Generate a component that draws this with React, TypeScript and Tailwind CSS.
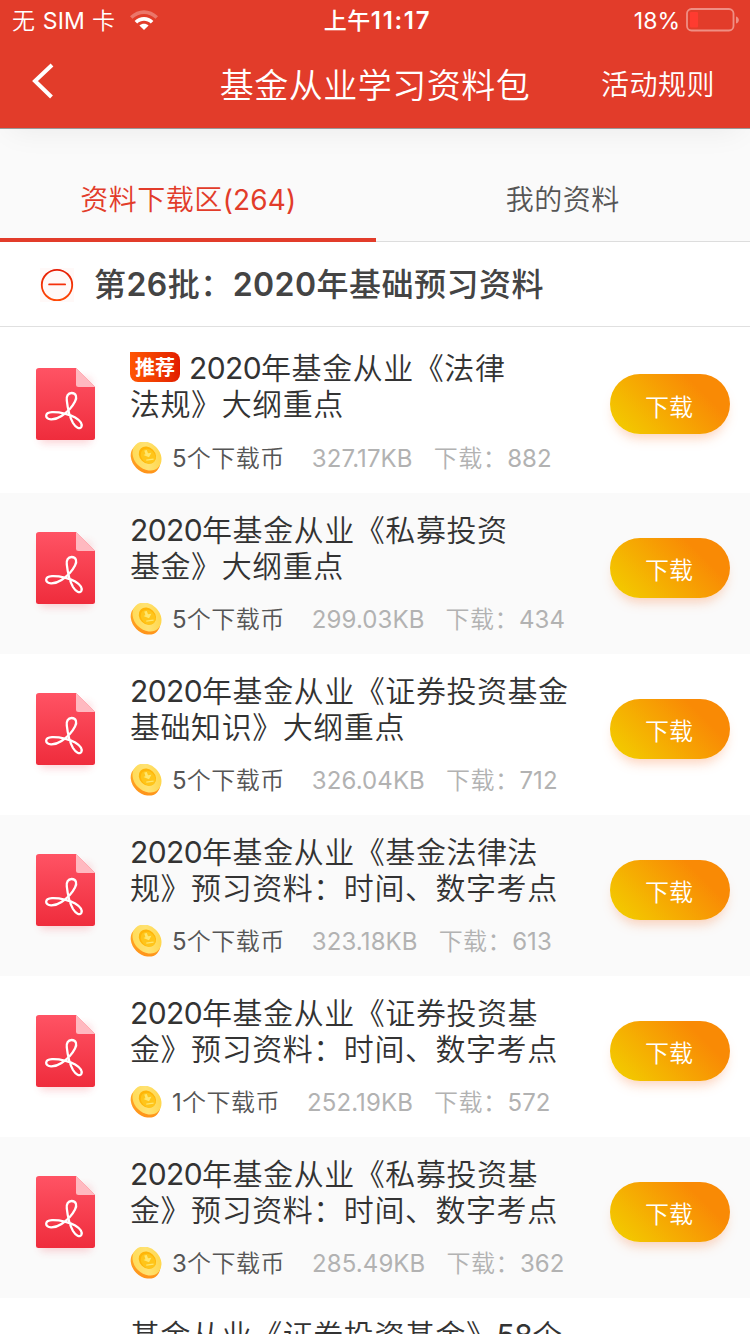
import clsx from 'clsx';

interface Material {
  id: number;
  title: string[];
  recommended?: boolean;
  coins?: number;
  size?: string;
  downloads?: number;
}

const materials: Material[] = [
  { id: 1, title: ['2020年基金从业《法律', '法规》大纲重点'], recommended: true, coins: 5, size: '327.17KB', downloads: 882 },
  { id: 2, title: ['2020年基金从业《私募投资', '基金》大纲重点'], coins: 5, size: '299.03KB', downloads: 434 },
  { id: 3, title: ['2020年基金从业《证券投资基金', '基础知识》大纲重点'], coins: 5, size: '326.04KB', downloads: 712 },
  { id: 4, title: ['2020年基金从业《基金法律法', '规》预习资料：时间、数字考点'], coins: 5, size: '323.18KB', downloads: 613 },
  { id: 5, title: ['2020年基金从业《证券投资基', '金》预习资料：时间、数字考点'], coins: 1, size: '252.19KB', downloads: 572 },
  { id: 6, title: ['2020年基金从业《私募投资基', '金》预习资料：时间、数字考点'], coins: 3, size: '285.49KB', downloads: 362 },
  { id: 7, title: ['基金从业《证券投资基金》58个'] },
];

// Numbers inside Chinese text get their own weight and tracking.
function MixedText({ text, digitClass }: { text: string; digitClass: string }) {
  return (
    <span>
      {text.split(/(\d+)/).map((part, i) =>
        i % 2 === 1 ? (
          <span key={i} className={digitClass}>
            {part}
          </span>
        ) : (
          part
        ),
      )}
    </span>
  );
}

function WifiIcon() {
  return (
    <svg width="28" height="20" viewBox="0 0 28 20" className="ml-[14px]">
      <path d="M0 6.3C8 -1.8 20 -1.8 28 6.3L25.5 8.7C19 2.3 9 2.3 2.5 8.7Z" fill="#fff" opacity="0.3" />
      <path d="M4.6 11C9.8 5.7 18.2 5.7 23.4 11L20.8 13.5C17.1 9.8 10.9 9.8 7.2 13.5Z" fill="#fff" />
      <path d="M9.4 15.6C12 13.1 16 13.1 18.6 15.6L14 20Z" fill="#fff" />
    </svg>
  );
}

function BatteryIcon() {
  return (
    <svg width="54" height="24" viewBox="0 0 54 24" className="ml-[6px]">
      <rect x="1" y="1" width="46.5" height="21.5" rx="4.5" fill="none" stroke="#ef8f84" strokeWidth="1.8" />
      <rect x="4" y="4" width="8" height="15.5" rx="1" fill="#ff3b30" />
      <path d="M50 8.5C53.8 9.5 53.8 14.5 50 15.5Z" fill="#ef8f84" />
    </svg>
  );
}

function MinusIcon() {
  return (
    <svg width="34" height="34" viewBox="0 0 34 34" className="mt-0.5">
      <defs>
        <linearGradient id="minus" gradientUnits="userSpaceOnUse" x1="0" y1="1" x2="0" y2="33">
          <stop offset="0" stopColor="#e51c05" />
          <stop offset="1" stopColor="#ff4a06" />
        </linearGradient>
      </defs>
      <rect width="34" height="34" fill="#fff9f8" />
      <circle cx="17" cy="17" r="15.2" fill="none" stroke="url(#minus)" strokeWidth="1.8" />
      <rect x="8.2" y="15.5" width="17.8" height="1.8" rx="0.9" fill="#f5300a" />
    </svg>
  );
}

function PdfIcon() {
  return (
    <svg width="84" height="90" viewBox="0 0 84 90" className="mb-1.5 shrink-0">
      <defs>
        <linearGradient id="pdf" x1="0" y1="0" x2="0" y2="1">
          <stop offset="0" stopColor="#ff5364" />
          <stop offset="1" stopColor="#ef2c3c" />
        </linearGradient>
        <filter id="pdfShadow" x="-20%" y="-20%" width="140%" height="150%">
          <feGaussianBlur stdDeviation="4" />
        </filter>
      </defs>
      <rect x="16" y="16" width="51" height="65" rx="4" fill="#f03040" opacity="0.22" filter="url(#pdfShadow)" />
      <path d="M15 6H52L71 25V75.5Q71 78 68.5 78H14.5Q12 78 12 75.5V8.5Q12 6 15 6Z" fill="url(#pdf)" />
      <path d="M52 6L71 25H54.5Q52 25 52 22.5Z" fill="#ffb9c0" />
      <path
        d="M42.8 38.5C42.2 34 44 31 47.6 31C52.4 31 53.2 35.5 51 39.5C48 45.5 42 51 37.5 54C33.5 56.7 30.5 57.4 27 57.3C20.5 57 20.3 50.6 28 50.2C36 49.9 46 52.3 51.2 55.4C56 58.4 58.6 61.8 57.4 64.8C56 68 51.5 65.2 49 61C46.5 56.5 43.6 46 42.8 38.5Z"
        fill="none"
        stroke="#fff"
        strokeWidth="2.3"
        strokeLinejoin="round"
      />
    </svg>
  );
}

function CoinIcon() {
  return (
    <svg width="32" height="32" viewBox="0 0 32 32" className="shrink-0">
      <defs>
        <linearGradient id="coinEdge" x1="0" y1="0" x2="1" y2="1">
          <stop offset="0" stopColor="#ffb52e" />
          <stop offset="1" stopColor="#ff8e16" />
        </linearGradient>
        <linearGradient id="coinFace" x1="0" y1="1" x2="1" y2="0">
          <stop offset="0" stopColor="#ffd94e" />
          <stop offset="0.5" stopColor="#ffe272" />
          <stop offset="1" stopColor="#ffd23c" />
        </linearGradient>
      </defs>
      <ellipse cx="15.5" cy="16.8" rx="16.4" ry="13" transform="rotate(45 15.5 16.8)" fill="url(#coinEdge)" />
      <ellipse cx="17" cy="14" rx="16" ry="12.8" transform="rotate(45 17 14)" fill="url(#coinFace)" />
      <ellipse cx="17.4" cy="13.2" rx="9.4" ry="7.8" transform="rotate(45 17.4 13.2)" fill="#ffb508" />
      <ellipse cx="18.1" cy="14.1" rx="8.2" ry="6.6" transform="rotate(45 18.1 14.1)" fill="#ffc51a" />
      <path d="M14.3 8.6L16.8 8L18 11.2L21.4 10.8L19 15.2L13.4 13L15.4 12.3Z" fill="#ffe66e" />
      <path d="M16.3 18.2L23.6 17.2" stroke="#ffe66e" strokeWidth="1.3" />
    </svg>
  );
}

function MaterialRow({ item }: { item: Material }) {
  return (
    <li
      className={clsx(
        'flex shrink-0 items-center pr-5 pl-6',
        item.recommended ? 'h-[166px]' : 'h-[161px]',
        item.id % 2 === 0 && 'bg-[#fafafa]',
      )}
    >
      {item.coins && <PdfIcon />}
      <div
        className={clsx(
          'flex h-full flex-1 flex-col whitespace-nowrap',
          item.coins ? 'ml-[22px]' : 'ml-[106px]',
          item.recommended ? 'pt-[23px]' : 'pt-[19px]',
        )}
      >
        <h3 className="text-[30px] leading-9 tracking-[0.55px] text-[#333]">
          {item.title.map((line, i) => (
            <span key={line} className="flex h-9 items-center">
              {item.recommended && i === 0 && (
                <span className="mr-[9px] mb-0.5 flex h-[30px] w-[50px] items-center justify-center rounded-lg rounded-tl-none bg-linear-to-r from-[#ff5503] to-[#e21c00] pt-px text-[20px] font-bold tracking-normal text-white">
                  推荐
                </span>
              )}
              <MixedText text={line} digitClass="font-normal tracking-[-0.6px]" />
            </span>
          ))}
        </h3>
        {item.coins && (
          <div
            className={clsx(
              'flex h-8 items-center text-[24px] tracking-[0.5px] text-[#b2b2b2]',
              item.recommended ? 'mt-5' : 'mt-[19px]',
            )}
          >
            <CoinIcon />
            <span className="ml-[10px] pt-0.5 text-[#555]">
              <MixedText text={`${item.coins}个下载币`} digitClass="font-normal tracking-[0.2px]" />
            </span>
            <span className="ml-[27px] pt-0.5 font-normal tracking-[0.1px]">{item.size}</span>
            <span className="ml-[21px] pt-0.5">
              <MixedText text={`下载：${item.downloads}`} digitClass="font-normal tracking-[0.1px]" />
            </span>
          </div>
        )}
      </div>
      {item.coins && (
        <button
          type="button"
          className="mb-3 h-[60px] w-[120px] shrink-0 rounded-full bg-linear-[45deg] from-[#f3c600] from-12% to-[#f98a05] to-75% pt-[7px] pr-0.5 text-[24px] text-white shadow-[0_8px_12px_-4px_rgba(250,125,60,0.35)]"
        >
          下载
        </button>
      )}
    </li>
  );
}

export default function App() {
  return (
    <main className="flex h-[1334px] w-[750px] flex-col overflow-hidden bg-white font-['Inter','Noto_Sans_CJK_SC',sans-serif] font-[350]">
      <header className="relative z-10 h-[129px] shrink-0 border-b border-[#999] bg-[#e23c2a] text-white shadow-[0_10px_30px_-10px_rgba(0,0,0,0.07)]">
        <div className="grid h-10 grid-cols-[1fr_auto_1fr] items-center text-[23px]">
          <div className="flex items-center pl-3">
            <span className="pt-0.5 tracking-[0.6px]">
              无 <span className="font-normal tracking-[0.2px]">SIM</span> 卡
            </span>
            <WifiIcon />
          </div>
          <time className="pt-0.5 pl-[5px] font-medium">
            <span className="tracking-[0.5px]">上午</span>
            <span className="text-[24px] font-semibold tracking-[1.7px]">11:17</span>
          </time>
          <div className="flex items-center justify-end pr-[10px] font-normal">
            <span className="pt-0.5">18%</span>
            <BatteryIcon />
          </div>
        </div>
        <div className="grid h-[88px] grid-cols-[1fr_auto_1fr] items-center">
          <button type="button" aria-label="返回" className="mb-[6px] pl-[31px]">
            <svg width="24" height="36" viewBox="0 0 24 36" fill="none" stroke="#fff" strokeWidth="4">
              <path d="M21 2L4 18L20.5 34" />
            </svg>
          </button>
          <h1 className="pt-0.5 text-[34px] tracking-[0.5px]">基金从业学习资料包</h1>
          <button type="button" className="pt-0.5 pr-[35px] text-right text-[28px] tracking-[0.5px]">
            活动规则
          </button>
        </div>
      </header>

      <nav className="flex h-[113px] shrink-0 bg-[#fafafa] text-[28px] tracking-[0.5px]">
        <button type="button" className="flex-1 border-b-4 border-[#e23c2a] pt-8 pl-px text-[#e23c2a]">
          资料下载区<span className="font-normal tracking-[0.1px]">(264)</span>
        </button>
        <button type="button" className="flex-1 border-b border-[#ddd] pt-[30px] text-[#555]">
          我的资料
        </button>
      </nav>

      <section className="flex h-[85px] shrink-0 items-center border-b border-[#e0e0e0] pl-10">
        <MinusIcon />
        <h2 className="ml-5 pt-px text-[32px] font-medium tracking-[0.5px] text-[#444]">
          <MixedText text="第26批：2020年基础预习资料" digitClass="font-semibold tracking-[0.4px]" />
        </h2>
      </section>

      <ul className="flex flex-col">
        {materials.map((item) => (
          <MaterialRow key={item.id} item={item} />
        ))}
      </ul>
    </main>
  );
}
